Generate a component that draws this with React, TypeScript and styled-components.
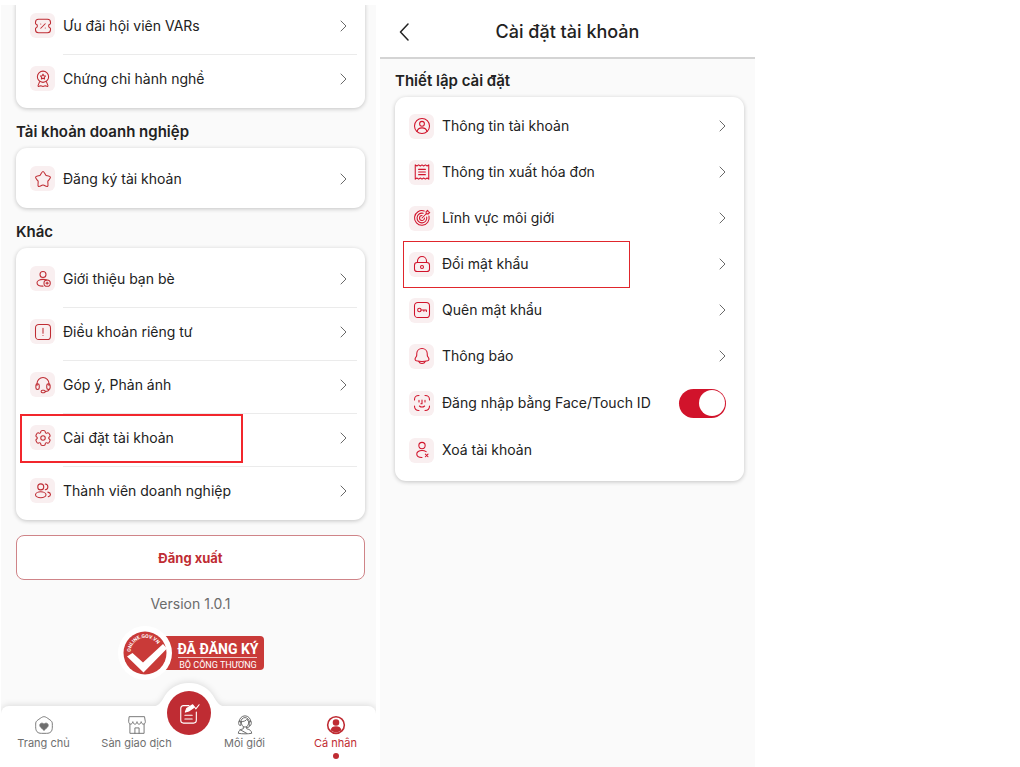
import React from "react";
import styled, { createGlobalStyle, css } from "styled-components";

const BRAND = "#bf2c33";
const CRIMSON = "#d1132b";

const GlobalStyle = createGlobalStyle`
  *, *::before, *::after { box-sizing: border-box; }
  body {
    margin: 0;
    background: #fff;
    color: #222;
    font-family: Inter, "Noto Sans", sans-serif;
  }
  ul { list-style: none; margin: 0; padding: 0; }
  h1, h2, p { margin: 0; }
  a { color: inherit; text-decoration: none; }
  button { font: inherit; cursor: pointer; }
  svg { display: block; }
`;

const Page = styled.main`
  display: grid;
  grid-template-columns: 375fr 375fr 261fr;
  column-gap: 4px;
  min-height: 100vh;
  padding-left: 1px;
`;

const Screen = styled.section<{ $cropped?: boolean }>`
  display: flex;
  flex-direction: column;
  overflow: hidden;
  background: #fafafa;
  ${(p) => p.$cropped && css`margin-top: 5px;`}
`;

const Content = styled.div`
  display: flex;
  flex-direction: column;
  padding: 0 11px 0 15px;
`;

const SectionTitle = styled.h2<{ $compact?: boolean }>`
  margin: ${(p) => (p.$compact ? 12 : 14)}px 0 6px;
  font-size: 15px;
  font-weight: 600;
  line-height: 20px;
`;

const Card = styled.ul<{ $scrolled?: boolean; $compact?: boolean }>`
  padding: ${(p) => (p.$compact ? "6px 0 8px" : "7px 0 0")};
  border-radius: 11px;
  background: #fff;
  box-shadow: 0 1px 4px rgba(0, 0, 0, 0.22);
  ${(p) => p.$scrolled && css`margin-top: -10px;`}
`;

const Item = styled.li<{ $divided?: boolean; $marked?: boolean; $tall?: boolean }>`
  position: relative;
  height: ${(p) => (p.$divided ? 53 : p.$tall ? 48 : 46)}px;
  ${(p) =>
    p.$marked &&
    css`
      &::after {
        content: "";
        position: absolute;
        inset: 0 auto 0 ${p.$divided ? 4 : 8}px;
        width: ${p.$divided ? "64%" : "65%"};
        height: ${p.$divided ? 49 : 47}px;
        border: ${p.$divided ? "2px solid #f2262c" : "1px solid #e0262c"};
        pointer-events: none;
      }
    `}
`;

const rowLayout = css`
  display: grid;
  grid-template-columns: 25px 1fr;
  column-gap: 8px;
  align-items: center;
  height: 100%;
  padding: 0 8px 0 14px;
`;

const RowLink = styled.a`
  ${rowLayout}
`;

const RowLabel = styled.label`
  ${rowLayout}
`;

const IconTile = styled.span<{ $divided?: boolean; $tone: string }>`
  display: grid;
  place-items: center;
  height: 25px;
  margin-bottom: ${(p) => (p.$divided ? 6 : 0)}px;
  border-radius: 6px;
  background: #f9eff0;
  color: ${(p) => p.$tone};
`;

const RowBody = styled.span<{ $divided?: boolean; $line?: boolean }>`
  display: flex;
  align-items: center;
  justify-content: space-between;
  height: 100%;
  padding-right: 10px;
  font-size: 14px;
  font-weight: 400;
  line-height: 20px;
  white-space: nowrap;
  ${(p) =>
    p.$divided &&
    css`
      padding-bottom: 5px;
      border-bottom: 1px solid ${p.$line ? "#ebebeb" : "transparent"};
    `}
`;

const Switch = styled.input`
  appearance: none;
  display: flex;
  align-items: center;
  justify-content: flex-end;
  width: 47px;
  height: 29px;
  margin: 0;
  padding: 0 1px;
  border-radius: 15px;
  background: ${CRIMSON};
  cursor: pointer;
  &::before {
    content: "";
    width: 26px;
    height: 26px;
    border-radius: 50%;
    background: #fff;
  }
  &:not(:checked) {
    justify-content: flex-start;
    background: #c9c9c9;
  }
`;

const LogoutButton = styled.button`
  height: 45px;
  margin-top: 15px;
  border: 1px solid #cf8488;
  border-radius: 8px;
  background: #fff;
  color: ${BRAND};
  font-size: 13px;
  font-weight: 700;
`;

const Version = styled.p`
  margin-top: 15px;
  color: #6b6b6b;
  font-size: 14px;
  font-weight: 400;
  line-height: 18px;
  text-align: center;
`;

const CertificateLink = styled.a`
  align-self: center;
  margin-top: 13px;
`;

const TabBar = styled.nav`
  position: relative;
  margin-top: auto;
  height: 61px;
`;

const TabBackdrop = styled.div`
  position: absolute;
  inset: 0;
  border-radius: 8px 8px 0 0;
  background: #fff;
  filter: drop-shadow(0 -1px 3px rgba(0, 0, 0, 0.12));
  svg {
    position: absolute;
    left: 50%;
    bottom: 100%;
    transform: translateX(-50%);
    margin-bottom: -1px;
  }
`;

const Tabs = styled.ul`
  position: relative;
  display: grid;
  grid-template-columns: 85fr 101fr 7fr 101fr 81fr;
  li:nth-child(3) { grid-column: 4; }
  li:nth-child(4) { grid-column: 5; }
`;

const Tab = styled.a<{ $active?: boolean }>`
  display: flex;
  flex-direction: column;
  align-items: center;
  padding-top: 9px;
  color: ${(p) => (p.$active ? BRAND : "#6f6f6f")};
  font-size: 11px;
  line-height: 16px;
  white-space: nowrap;
  ${(p) =>
    p.$active &&
    css`
      &::after {
        content: "";
        width: 6px;
        height: 6px;
        margin-top: 2px;
        border-radius: 50%;
        background: currentColor;
      }
    `}
`;

const ComposeButton = styled.button`
  position: absolute;
  top: -15px;
  left: 50%;
  display: grid;
  place-items: center;
  width: 44px;
  height: 44px;
  padding: 0;
  transform: translateX(-50%);
  border: 0;
  border-radius: 50%;
  background: ${BRAND};
  color: #fff;
`;

const Header = styled.header`
  display: grid;
  grid-template-columns: 48px 1fr 48px;
  align-items: center;
  height: 59px;
  padding-top: 7px;
  border-bottom: 2px solid #d4d4d4;
  background: #fff;
`;

const BackButton = styled.button`
  display: grid;
  place-items: center;
  height: 40px;
  padding: 0;
  border: 0;
  background: none;
  color: #222;
`;

const Title = styled.h1`
  font-size: 18px;
  font-weight: 500;
  line-height: 24px;
  text-align: center;
`;

const Glyph = ({ children, size = 18, stroke = 1.4 }: { children: React.ReactNode; size?: number; stroke?: number }) => (
  <svg width={size} height={size} viewBox="0 0 24 24" fill="none" stroke="currentColor" strokeWidth={stroke} strokeLinecap="round" strokeLinejoin="round" aria-hidden="true">
    {children}
  </svg>
);

const Chevron = () => (
  <svg width="7" height="12" viewBox="0 0 7 12" fill="none" stroke="#6a6a6a" strokeLinecap="round" strokeLinejoin="round" aria-hidden="true">
    <path d="M1 1l5 5-5 5" />
  </svg>
);

const icons = {
  ticket: (
    <Glyph>
      <path d="M6 3h12c3 0 4 1 4 4v1.500c0 .6-.4 1-1 1.200a2.500 2.500 0 0 0 0 4.600c.6.2 1 .6 1 1.200V17c0 3-1 4-4 4H6c-3 0-4-1-4-4v-1.500c0-.6.4-1 1-1.200a2.500 2.500 0 0 0 0-4.600c-.6-.2-1-.6-1-1.200V7c0-3 1-4 4-4z" />
      <path d="M9 15l6-6M9 9.300h.01M15 14.700h.01" />
    </Glyph>
  ),
  medal: (
    <Glyph>
      <circle cx="12" cy="9" r="7.500" />
      <path d="M12 5.500l1.100 2.100 2.300.4-1.600 1.700.3 2.300-2.100-1-2.100 1 .3-2.300-1.600-1.700 2.300-.4z" />
      <path d="M7.500 15.500L5.500 20.500c-.3 1.100.3 1.600 1.300 1.300l2.200-.8 3 1 3-1 2.200.8c1 .3 1.600-.2 1.300-1.300l-2-5" />
    </Glyph>
  ),
  star: (
    <Glyph>
      <path d="M9.150 5.410C10.420 3.140 11.060 2 12 2s1.580 1.140 2.850 3.410l.33.59c.36.64.54.97.82 1.180s.63.29 1.330.45l.64.14c2.460.56 3.690.84 3.980 1.780s-.54 1.920-2.220 3.880l-.43.51c-.48.56-.72.84-.83 1.180-.1.34-.07.72.01 1.460l.06.68c.26 2.620.38 3.930-.38 4.480s-1.920.02-4.230-1.040l-.6-.28c-.65-.3-.98-.45-1.330-.45s-.68.15-1.330.45l-.6.28c-2.310 1.060-3.460 1.590-4.230 1.040s-.64-1.860-.38-4.480l.06-.68c.08-.74.11-1.120.01-1.460-.11-.34-.35-.62-.83-1.180l-.43-.51C2.600 11.500 1.760 10.500 2.050 9.550s1.520-1.220 3.980-1.780l.64-.14c.7-.16 1.050-.24 1.330-.45s.46-.54.82-1.180z" />
    </Glyph>
  ),
  invite: (
    <Glyph>
      <circle cx="12" cy="6" r="4" />
      <path d="M17 13.300c-1.400-.5-3.100-.8-5-.8-4.400 0-8 2-8 4.500S7 21.500 12 21.500" />
      <circle cx="17.500" cy="17.500" r="4.200" />
      <path d="M17.500 16v3M16 17.500h3" />
    </Glyph>
  ),
  terms: (
    <Glyph>
      <rect x="2" y="2" width="20" height="20" rx="4.500" />
      <path d="M12 7v6.500M12 16.600h.01" />
    </Glyph>
  ),
  headset: (
    <Glyph>
      <path d="M4 12.500V10a8 8 0 0 1 16 0v2.500" />
      <rect x="2.500" y="10.500" width="4.500" height="7.500" rx="2.200" />
      <rect x="17" y="10.500" width="4.500" height="7.500" rx="2.200" />
      <path d="M20 17.800c0 2-1.800 2.800-5 2.800" />
      <rect x="9.500" y="19" width="5.500" height="3.200" rx="1.600" />
    </Glyph>
  ),
  gear: (
    <Glyph>
      <circle cx="12" cy="12" r="3" />
      <path d="M13.765 2.152C13.398 2 12.932 2 12 2s-1.398 0-1.765.152a2 2 0 0 0-1.083 1.083c-.092.223-.129.483-.143.863a1.617 1.617 0 0 1-.79 1.353 1.617 1.617 0 0 1-1.567.008c-.336-.178-.579-.276-.82-.308a2 2 0 0 0-1.478.396c-.315.242-.548.646-1.014 1.453-.466.807-.699 1.210-.751 1.605a2 2 0 0 0 .396 1.479c.148.192.355.353.676.555.473.297.777.803.777 1.361s-.304 1.064-.777 1.361c-.321.202-.529.363-.676.555a2 2 0 0 0-.396 1.479c.052.394.285.798.751 1.605.466.807.699 1.210 1.014 1.453a2 2 0 0 0 1.479.396c.24-.032.483-.13.819-.308a1.617 1.617 0 0 1 1.567.008c.483.279.769.795.79 1.353.014.380.051.640.143.863a2 2 0 0 0 1.083 1.083C10.602 22 11.068 22 12 22s1.398 0 1.765-.152a2 2 0 0 0 1.083-1.083c.092-.223.129-.483.143-.863.021-.558.307-1.074.790-1.353a1.617 1.617 0 0 1 1.567-.008c.336.178.579.276.819.308a2 2 0 0 0 1.479-.396c.315-.243.548-.646 1.014-1.453.466-.807.699-1.211.751-1.605a2 2 0 0 0-.396-1.479c-.148-.192-.355-.353-.676-.555A1.617 1.617 0 0 1 19.562 12c0-.558.304-1.064.777-1.361.321-.202.529-.363.676-.555a2 2 0 0 0 .396-1.479c-.052-.395-.285-.798-.751-1.605-.466-.807-.699-1.211-1.014-1.453a2 2 0 0 0-1.479-.396c-.24.032-.483.130-.819.308a1.617 1.617 0 0 1-1.567-.008 1.617 1.617 0 0 1-.790-1.353c-.014-.380-.051-.640-.143-.863a2 2 0 0 0-1.083-1.083z" />
    </Glyph>
  ),
  members: (
    <Glyph>
      <circle cx="9" cy="6.500" r="4" />
      <path d="M15 2.800c2 .2 3.500 1.800 3.500 3.700s-1.500 3.500-3.500 3.700" />
      <ellipse cx="9" cy="17" rx="7" ry="4" />
      <path d="M18.500 13.500c2 .5 3.500 1.700 3.500 3.200s-1.300 2.500-3 3" />
    </Glyph>
  ),
  profile: (
    <Glyph>
      <circle cx="12" cy="12" r="10" />
      <circle cx="12" cy="9" r="3.200" />
      <path d="M5.500 19.300c.6-3.200 2.800-4.800 6.500-4.800s5.900 1.600 6.500 4.800" />
    </Glyph>
  ),
  invoice: (
    <Glyph>
      <path d="M3 2.500l2.200 1.500 2.300-1.500L9.800 4 12 2.500 14.200 4l2.300-1.500L18.800 4 21 2.500v19L18.800 20l-2.300 1.500L14.200 20 12 21.500 9.800 20l-2.300 1.500L5.200 20 3 21.500z" />
      <path d="M7.500 8.500h9M7.500 12h9M7.500 15.500h9" />
    </Glyph>
  ),
  target: (
    <Glyph>
      <path d="M21.300 9.500A9.800 9.800 0 1 1 15 2.700M18.300 10.800A6.500 6.500 0 1 1 13.500 5.700" />
      <path d="M15.300 12A3.300 3.300 0 1 1 12 8.700" />
      <path d="M12 12l6-6M17.500 6.500V3.500l2-1.800.8 2 2 .8-1.800 2z" />
    </Glyph>
  ),
  lock: (
    <Glyph>
      <rect x="2" y="10" width="20" height="12" rx="3.500" />
      <path d="M6 10V8a6 6 0 0 1 12 0v2" />
      <circle cx="12" cy="16" r="2" />
    </Glyph>
  ),
  key: (
    <Glyph>
      <rect x="2" y="2" width="20" height="20" rx="4.500" />
      <circle cx="8.500" cy="12" r="2.300" />
      <path d="M10.800 12h7v2M14.500 12v1.700" />
    </Glyph>
  ),
  bell: (
    <Glyph>
      <path d="M12 2c-4 0-7 3-7 7v1.500c0 1-.2 1.700-.8 2.600l-1 1.600c-1 1.700-.3 3 1.300 3.500 4.800 1.300 10.200 1.300 15 0 1.600-.5 2.300-1.800 1.300-3.500l-1-1.600c-.6-.9-.8-1.600-.8-2.600V9c0-4-3-7-7-7z" />
      <path d="M7.700 19.300C8.400 21 10 22 12 22s3.600-1 4.300-2.700" />
    </Glyph>
  ),
  face: (
    <Glyph>
      <path d="M2 8c0-4.500 1.500-6 6-6M22 8c0-4.500-1.500-6-6-6M2 16c0 4.500 1.500 6 6 6M22 16c0 4.500-1.500 6-6 6" />
      <path d="M8 8.500v2M16 8.500v2M12 8v5M10.500 13h1.500M8.500 16c2 1.600 5 1.600 7 0" />
    </Glyph>
  ),
  remove: (
    <Glyph>
      <circle cx="12" cy="6" r="4.200" />
      <path d="M17.500 14.200c-1.400-1-3.300-1.600-5.500-1.600-4.100 0-7 2-7 4.700s2.700 4.700 7 4.700M16.500 17.500l3.500 3.500M20 17.500L16.500 21" />
    </Glyph>
  ),
};

type Entry = { icon: keyof typeof icons; text: string; marked?: boolean };

const memberEntries: Entry[] = [
  { icon: "ticket", text: "Ưu đãi hội viên VARs" },
  { icon: "medal", text: "Chứng chỉ hành nghề" },
];

const businessEntries: Entry[] = [{ icon: "star", text: "Đăng ký tài khoản" }];

const otherEntries: Entry[] = [
  { icon: "invite", text: "Giới thiệu bạn bè" },
  { icon: "terms", text: "Điều khoản riêng tư" },
  { icon: "headset", text: "Góp ý, Phản ánh" },
  { icon: "gear", text: "Cài đặt tài khoản", marked: true },
  { icon: "members", text: "Thành viên doanh nghiệp" },
];

const settingEntries: Entry[] = [
  { icon: "profile", text: "Thông tin tài khoản" },
  { icon: "invoice", text: "Thông tin xuất hóa đơn" },
  { icon: "target", text: "Lĩnh vực môi giới" },
  { icon: "lock", text: "Đổi mật khẩu", marked: true },
  { icon: "key", text: "Quên mật khẩu" },
  { icon: "bell", text: "Thông báo" },
];

const EntryRow = ({ entry, divided, line, plain }: { entry: Entry; divided?: boolean; line?: boolean; plain?: boolean }) => (
  <Item $divided={divided} $marked={entry.marked}>
    <RowLink href="#">
      <IconTile $divided={divided} $tone={divided ? BRAND : CRIMSON}>{icons[entry.icon]}</IconTile>
      <RowBody $divided={divided} $line={line}>
        {entry.text}
        {!plain && <Chevron />}
      </RowBody>
    </RowLink>
  </Item>
);

const DividedCard = ({ entries, scrolled }: { entries: Entry[]; scrolled?: boolean }) => (
  <Card $scrolled={scrolled}>
    {entries.map((entry, i) => (
      <EntryRow key={entry.text} entry={entry} divided line={i < entries.length - 1} />
    ))}
  </Card>
);

const Certificate = () => (
  <svg width="148" height="54" viewBox="0 0 148 54" role="img" aria-label="Đã đăng ký Bộ Công Thương">
    <rect x="40" y="10" width="107" height="34" rx="4" fill="#c93a38" />
    <circle cx="28" cy="27" r="27" fill="#fff" />
    <circle cx="28" cy="27" r="21.500" fill="#c93a38" />
    <path d="M10 30.500l5.500-3.500 10.500 9.500 20-18.500 4 4.500-23.500 24z" fill="#fff" />
    <path id="certificate-arc" d="M13.500 26A14.800 14.800 0 0 1 43 25" fill="none" />
    <text fill="#fff" fontFamily="Roboto, sans-serif" fontSize="5" fontWeight="700">
      <textPath href="#certificate-arc">ONLINE.GOV.VN</textPath>
    </text>
    <text x="101" y="28" fill="#fff" textAnchor="middle" fontFamily='"Liberation Sans Narrow", Roboto, sans-serif' fontSize="14" fontWeight="700">ĐÃ ĐĂNG KÝ</text>
    <path d="M61 31.500h79" stroke="#fff" strokeWidth="0.700" />
    <text x="101" y="42" fill="#fff" textAnchor="middle" fontFamily="Roboto, sans-serif" fontSize="9">BỘ CÔNG THƯƠNG</text>
  </svg>
);

const HomeIcon = () => (
  <Glyph size={20} stroke={1.1}>
    <path d="M2 12.500c0-2.800 0-3.700 1-5 .8-1 2-1.700 4.500-3.500C9.700 2.500 10.800 2 12 2s2.300.5 4.500 2C19 5.800 20.200 6.500 21 7.500c1 1.300 1 2.200 1 5v2c0 5-2 7.500-7 7.500H9c-5 0-7-2.500-7-7.500z" />
    <path d="M12 18c-3-2-5-3.700-5-5.700 0-2.700 3.300-3.300 5-1.200 1.700-2.100 5-1.500 5 1.200 0 2-2 3.700-5 5.700z" fill="currentColor" />
  </Glyph>
);

const ShopIcon = () => (
  <Glyph size={20} stroke={1.1}>
    <path d="M3.500 11v11h17V11M3 2h18l1 6c0 4-4.500 4-5 0-.5 4-4.700 4-5 0-.3 4-4.500 4-5 0-.5 4-5 4-5 0zM9.500 22v-6.500h5V22" />
  </Glyph>
);

const AgentIcon = () => (
  <Glyph size={20} stroke={1.2}>
    <path d="M5 8a7 7 0 0 1 14 0M7 9c-.5-8 10.500-8 10 0M7.500 8c3 0 5.500-1 7-3 .3 1.500 1 2.500 2 3 .2 4-2 6.500-4.500 6.500S7.300 12 7.500 8zM5 7.500h2v5H5.800C4 12.500 4 8 5 7.500zM19 7.500h-2v5h1.200c1.800 0 1.800-4.500.8-5M18 12.500c0 1.500-1.500 2.500-4 2.500" />
    <path d="M10 14v2.500c-4 1-6 2.500-6 5.500 5 .8 11 .8 16 0 0-3-2-4.500-6-5.500V14M6 17.500l8 4.500" />
  </Glyph>
);

const AccountIcon = () => (
  <Glyph size={20} stroke={1.900}>
    <circle cx="12" cy="12" r="10" />
    <circle cx="12" cy="9" r="3" fill="currentColor" />
    <path d="M6.500 18c.8-2.600 2.800-3.500 5.500-3.500s4.700.9 5.500 3.500c-3 2.600-8 2.600-11 0z" fill="currentColor" />
  </Glyph>
);

const ComposeIcon = () => (
  <Glyph size={22} stroke={1.200}>
    <path d="M12 4H6C4 4 3 5 3 7v13c0 2 1 3 3 3h11c2 0 3-1 3-3v-9M7.500 14.500h8M7.500 18.500h8" />
    <path d="M8 11l1.500-4L16 3l2 2.500-6.300 4.300z" fill="currentColor" />
    <path d="M18.500 6l1 1.500L23 3" />
  </Glyph>
);

const AccountScreen = () => (
  <Screen $cropped>
    <Content>
      <DividedCard entries={memberEntries} scrolled />
      <SectionTitle>Tài khoản doanh nghiệp</SectionTitle>
      <DividedCard entries={businessEntries} />
      <SectionTitle>Khác</SectionTitle>
      <DividedCard entries={otherEntries} />
      <LogoutButton type="button">Đăng xuất</LogoutButton>
      <Version>Version 1.0.1</Version>
      <CertificateLink href="#"><Certificate /></CertificateLink>
    </Content>
    <TabBar>
      <TabBackdrop>
        <svg width="80" height="24" viewBox="0 0 80 24" fill="#fff" aria-hidden="true">
          <path d="M0 24C8 24 11 21 14 16 19 6 28 0 40 0s21 6 26 16c3 5 6 8 14 8z" />
        </svg>
      </TabBackdrop>
      <Tabs>
        <li><Tab href="#"><HomeIcon />Trang chủ</Tab></li>
        <li><Tab href="#"><ShopIcon />Sàn giao dịch</Tab></li>
        <li><Tab href="#"><AgentIcon />Môi giới</Tab></li>
        <li><Tab href="#" $active aria-current="page"><AccountIcon />Cá nhân</Tab></li>
      </Tabs>
      <ComposeButton type="button" aria-label="Đăng tin"><ComposeIcon /></ComposeButton>
    </TabBar>
  </Screen>
);

const SettingsScreen = () => (
  <Screen>
    <Header>
      <BackButton type="button" aria-label="Quay lại">
        <svg width="10" height="18" viewBox="0 0 10 18" fill="none" stroke="currentColor" strokeWidth="1.500" strokeLinecap="round" strokeLinejoin="round" aria-hidden="true">
          <path d="M9 1L1.500 9 9 17" />
        </svg>
      </BackButton>
      <Title>Cài đặt tài khoản</Title>
    </Header>
    <Content>
      <SectionTitle $compact>Thiết lập cài đặt</SectionTitle>
      <Card $compact>
        {settingEntries.map((entry) => (
          <EntryRow key={entry.text} entry={entry} />
        ))}
        <Item $tall>
          <RowLabel>
            <IconTile $tone={CRIMSON}>{icons.face}</IconTile>
            <RowBody>
              Đăng nhập bằng Face/Touch ID
              <Switch type="checkbox" role="switch" defaultChecked />
            </RowBody>
          </RowLabel>
        </Item>
        <EntryRow entry={{ icon: "remove", text: "Xoá tài khoản" }} plain />
      </Card>
    </Content>
  </Screen>
);

export default function App() {
  return (
    <>
      <GlobalStyle />
      <Page>
        <AccountScreen />
        <SettingsScreen />
      </Page>
    </>
  );
}
